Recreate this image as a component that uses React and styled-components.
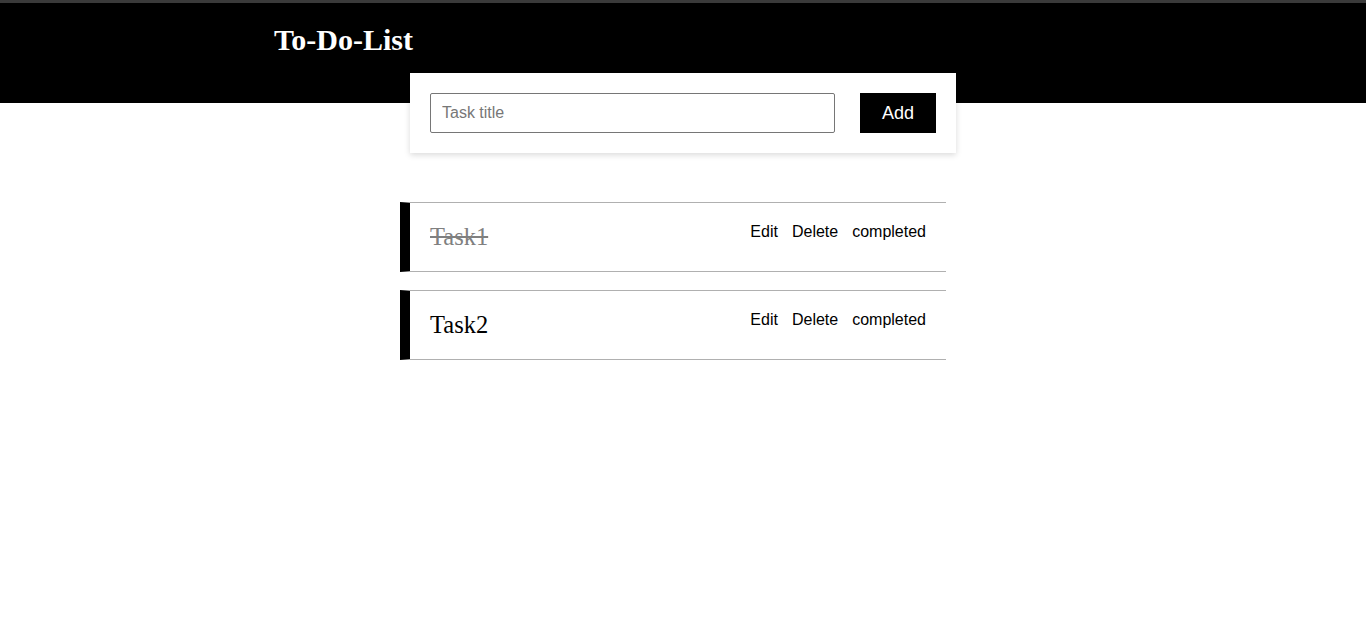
import React, { useState } from "react";
import styled, { createGlobalStyle } from "styled-components";

const GlobalStyle = createGlobalStyle`
  html, body {
    margin: 0;
    padding: 0;
    background: #fff;
    font-family: "Liberation Serif", "Times New Roman", serif;
  }
`;

const Header = styled.header`
  background: #000;
  border-top: 3px solid #3a3a3a;
  height: 103px;
  padding-left: 274px;
  box-sizing: border-box;
`;

const Title = styled.h1`
  margin: 0;
  padding-top: 20px;
  color: #fff;
  font-size: 30px;
  font-weight: bold;
  font-family: "Liberation Serif", "Times New Roman", serif;
`;

const FormCard = styled.form`
  width: 546px;
  box-sizing: border-box;
  margin: -30px auto 0;
  padding: 20px;
  background: #fff;
  box-shadow: 0 2px 6px rgba(0, 0, 0, 0.15);
  display: flex;
  gap: 25px;
`;

const TitleInput = styled.input`
  width: 405px;
  height: 40px;
  box-sizing: border-box;
  border: 1px solid #767676;
  border-radius: 2px;
  padding: 0 11px;
  font-size: 16px;
  font-family: "Liberation Sans", Arial, sans-serif;
  outline: none;
  &::placeholder {
    color: #777;
  }
`;

const AddButton = styled.button`
  width: 76px;
  height: 40px;
  border: none;
  background: #000;
  color: #fff;
  font-size: 18px;
  font-family: "Liberation Sans", Arial, sans-serif;
  cursor: pointer;
`;

const List = styled.ul`
  list-style: none;
  width: 566px;
  box-sizing: border-box;
  padding: 0 20px 0 0;
  margin: 49px auto 0;
  display: flex;
  flex-direction: column;
  gap: 18px;
`;

const Item = styled.li`
  display: flex;
  justify-content: space-between;
  align-items: flex-start;
  padding: 20px;
  border-top: 1px solid #b0b0b0;
  border-bottom: 1px solid #b0b0b0;
  border-left: 10px solid #000;
`;

const TaskName = styled.span`
  font-size: 24.5px;
  color: ${(p) => (p.$done ? "#808080" : "#000")};
  text-decoration: ${(p) => (p.$done ? "line-through" : "none")};
`;

const Actions = styled.div`
  display: flex;
  gap: 14px;
`;

const ActionButton = styled.button`
  border: none;
  background: none;
  padding: 0;
  margin: 0;
  font-size: 16px;
  font-family: "Liberation Sans", Arial, sans-serif;
  color: #000;
  cursor: pointer;
`;

const App = () => {
  const [title, setTitle] = useState("");
  const [tasks, setTasks] = useState([
    { id: 1, title: "Task1", done: true },
    { id: 2, title: "Task2", done: false },
  ]);

  const addTask = (e) => {
    e.preventDefault();
    if (!title.trim()) return;
    setTasks((prev) => [...prev, { id: Date.now(), title, done: false }]);
    setTitle("");
  };

  const toggle = (id) =>
    setTasks((prev) => prev.map((t) => (t.id === id ? { ...t, done: !t.done } : t)));

  const remove = (id) => setTasks((prev) => prev.filter((t) => t.id !== id));

  return (
    <>
      <GlobalStyle />
      <Header>
        <Title>To-Do-List</Title>
      </Header>
      <FormCard onSubmit={addTask}>
        <TitleInput
          placeholder="Task title"
          value={title}
          onChange={(e) => setTitle(e.target.value)}
        />
        <AddButton type="submit">Add</AddButton>
      </FormCard>
      <List>
        {tasks.map((t) => (
          <Item key={t.id}>
            <TaskName $done={t.done}>{t.title}</TaskName>
            <Actions>
              <ActionButton>Edit</ActionButton>
              <ActionButton onClick={() => remove(t.id)}>Delete</ActionButton>
              <ActionButton onClick={() => toggle(t.id)}>completed</ActionButton>
            </Actions>
          </Item>
        ))}
      </List>
    </>
  );
};

export default App;
